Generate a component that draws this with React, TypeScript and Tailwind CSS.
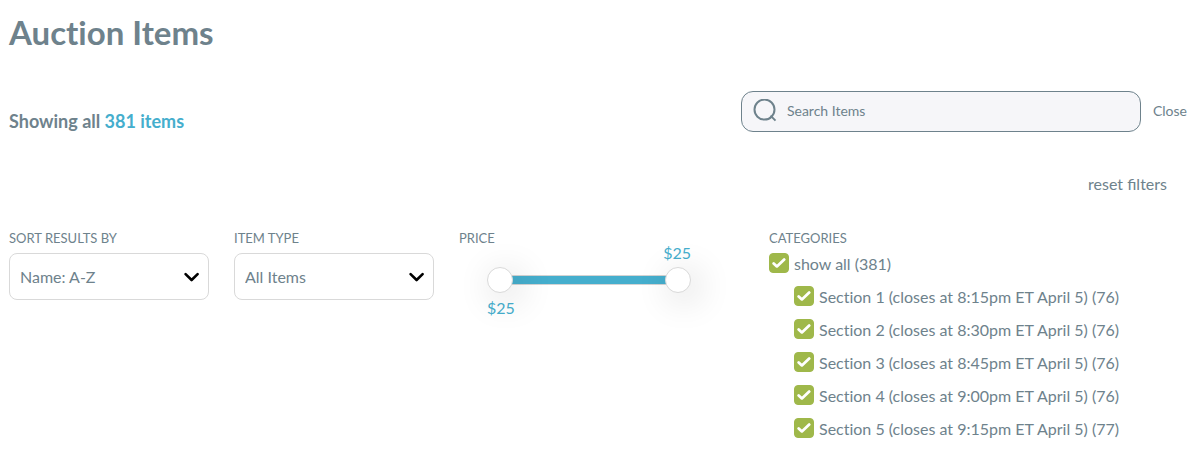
import { useState } from "react";

const sections = [
  { id: "section-1", label: "Section 1 (closes at 8:15pm ET April 5) (76)" },
  { id: "section-2", label: "Section 2 (closes at 8:30pm ET April 5) (76)" },
  { id: "section-3", label: "Section 3 (closes at 8:45pm ET April 5) (76)" },
  { id: "section-4", label: "Section 4 (closes at 9:00pm ET April 5) (76)" },
  { id: "section-5", label: "Section 5 (closes at 9:15pm ET April 5) (77)" },
];

const MIN_PRICE = 0;
const MAX_PRICE = 100;

const thumbClass =
  "pointer-events-none z-10 col-start-1 row-start-1 h-[26px] w-full appearance-none bg-transparent [&::-webkit-slider-thumb]:pointer-events-auto [&::-webkit-slider-thumb]:size-[26px] [&::-webkit-slider-thumb]:cursor-pointer [&::-webkit-slider-thumb]:appearance-none [&::-webkit-slider-thumb]:rounded-full [&::-webkit-slider-thumb]:border [&::-webkit-slider-thumb]:border-[#d9d9d9] [&::-webkit-slider-thumb]:bg-white [&::-webkit-slider-thumb]:shadow-[6px_6px_36px_rgba(0,0,0,0.2)]";

interface SelectFieldProps {
  id: string;
  label: string;
  options: string[];
}

function SelectField({ id, label, options }: SelectFieldProps) {
  return (
    <div className="w-[200px]">
      <label htmlFor={id} className="block text-[13px] leading-5 uppercase">
        {label}
      </label>
      <div className="mt-[5px] grid items-center">
        <select
          id={id}
          className="col-start-1 row-start-1 h-[47px] w-full appearance-none rounded-lg border border-[#d9d9d9] bg-white pr-9 pl-2.5 text-base"
        >
          {options.map((option) => (
            <option key={option}>{option}</option>
          ))}
        </select>
        <svg
          viewBox="0 0 16 10"
          className="pointer-events-none col-start-1 row-start-1 mr-2.5 h-2.5 w-4 justify-self-end"
          fill="none"
          stroke="#000"
          strokeWidth="2.6"
          strokeLinecap="round"
          strokeLinejoin="round"
        >
          <path d="M2.6 2.1l6 5.9 6-5.9" />
        </svg>
      </div>
    </div>
  );
}

function PriceFilter() {
  const [low, setLow] = useState(MIN_PRICE);
  const [high, setHigh] = useState(MAX_PRICE);

  return (
    <fieldset className="w-[285px]">
      <legend className="text-[13px] leading-5 uppercase">Price</legend>
      <div className="ml-7 w-[204px] text-base leading-[22px] text-[#45aecd]">
        <div className="-mt-1.5 text-right">$25</div>
        <div className="mt-[3px] grid items-center">
          <div className="col-start-1 row-start-1 mx-3 h-2.5 border-y border-[#d3d3d3] bg-[#45aecd]" />
          <input
            type="range"
            aria-label="Minimum price"
            min={MIN_PRICE}
            max={MAX_PRICE}
            value={low}
            onChange={(e) => setLow(Math.min(Number(e.target.value), high))}
            className={thumbClass}
          />
          <input
            type="range"
            aria-label="Maximum price"
            min={MIN_PRICE}
            max={MAX_PRICE}
            value={high}
            onChange={(e) => setHigh(Math.max(Number(e.target.value), low))}
            className={thumbClass}
          />
        </div>
        <div className="mt-1">$25</div>
      </div>
    </fieldset>
  );
}

interface CategoryCheckboxProps {
  id: string;
  label: string;
  checked: boolean;
  onChange: () => void;
}

function CategoryCheckbox({ id, label, checked, onChange }: CategoryCheckboxProps) {
  return (
    <div className="flex items-start gap-[5px]">
      <span className="grid place-items-center">
        <input
          id={id}
          type="checkbox"
          checked={checked}
          onChange={onChange}
          className="col-start-1 row-start-1 size-5 appearance-none rounded border border-[#9fb84a] bg-white checked:bg-[#9fb84a]"
        />
        <svg
          viewBox="0 0 14 10"
          className="pointer-events-none col-start-1 row-start-1 h-2.5 w-3.5"
          fill="none"
          stroke="#fff"
          strokeWidth="2.8"
          strokeLinecap="round"
          strokeLinejoin="round"
        >
          <path d="M1.7 5.4l3.2 3 7.3-6.8" />
        </svg>
      </span>
      <label htmlFor={id} className="text-base leading-[22px]">
        {label}
      </label>
    </div>
  );
}

function CategoryFilter() {
  const [selected, setSelected] = useState(sections.map((s) => s.id));
  const allSelected = selected.length === sections.length;

  const toggle = (id: string) =>
    setSelected((prev) =>
      prev.includes(id) ? prev.filter((s) => s !== id) : [...prev, id]
    );

  return (
    <fieldset className="flex-1">
      <legend className="text-[13px] leading-5 uppercase">Categories</legend>
      <div className="mt-[5px]">
        <CategoryCheckbox
          id="show-all"
          label="show all (381)"
          checked={allSelected}
          onChange={() => setSelected(allSelected ? [] : sections.map((s) => s.id))}
        />
        <ul className="mt-[11px] ml-[25px] space-y-[11px]">
          {sections.map((section) => (
            <li key={section.id}>
              <CategoryCheckbox
                id={section.id}
                label={section.label}
                checked={selected.includes(section.id)}
                onChange={() => toggle(section.id)}
              />
            </li>
          ))}
        </ul>
      </div>
    </fieldset>
  );
}

export default function App() {
  return (
    <main className="bg-white px-[9px] pt-3 pb-3 font-['Lato',sans-serif] text-[#6e828c] [font-variant-ligatures:no-common-ligatures]">
      <h1 className="text-[33px] leading-10 font-bold">Auction Items</h1>

      <div className="mt-[37px] flex items-center justify-between pr-2">
        <h2 className="mt-5 text-lg leading-6 font-bold">
          Showing all <span className="text-[#45aecd]">381 items</span>
        </h2>
        <form className="flex items-center gap-3" onSubmit={(e) => e.preventDefault()}>
          <label
            htmlFor="search"
            className="flex h-[41px] w-[400px] items-center gap-2.5 rounded-xl border border-[#6e828c] bg-[#f6f6f9] px-[11px]"
          >
            <svg
              viewBox="0 0 24 24"
              className="size-6 shrink-0"
              fill="none"
              stroke="currentColor"
              strokeWidth="2"
              aria-hidden="true"
            >
              <circle cx="11.5" cy="10.6" r="10" />
              <path d="M17.5 16.6l5 5" />
            </svg>
            <input
              id="search"
              type="search"
              aria-label="Search items"
              placeholder="Search Items"
              className="min-w-0 flex-1 bg-transparent text-sm outline-none placeholder:text-[#6e828c]"
            />
          </label>
          <button type="button" className="text-sm">
            Close
          </button>
        </form>
      </div>

      <div className="mt-[39px] flex justify-end pr-7">
        <button
          type="button"
          className="text-base leading-6 [font-variant-ligatures:common-ligatures]"
        >
          reset filters
        </button>
      </div>

      <div className="mt-8 flex items-start gap-[25px]">
        <SelectField
          id="sort-by"
          label="Sort results by"
          options={["Name: A-Z", "Name: Z-A"]}
        />
        <SelectField
          id="item-type"
          label="Item type"
          options={["All Items", "Live", "Silent"]}
        />
        <PriceFilter />
        <CategoryFilter />
      </div>
    </main>
  );
}
